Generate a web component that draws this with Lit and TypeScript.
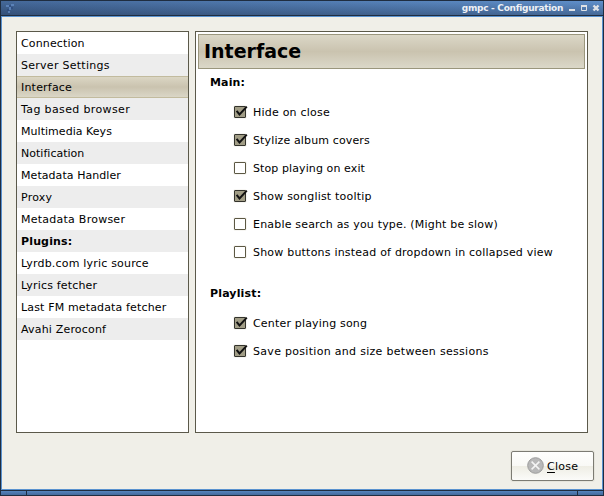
import { LitElement, html, css, svg } from "lit";
import { customElement, property } from "lit/decorators.js";
import { classMap } from "lit/directives/class-map.js";
import { styleMap } from "lit/directives/style-map.js";

interface Page {
  label: string;
  tracking: number;
}

interface Option extends Page {
  on: boolean;
}

const PAGES: Page[] = [
  { label: "Connection", tracking: 0.15 },
  { label: "Server Settings", tracking: 0.27 },
  { label: "Interface", tracking: 0.2 },
  { label: "Tag based browser", tracking: 0.37 },
  { label: "Multimedia Keys", tracking: 0.04 },
  { label: "Notification", tracking: 0.02 },
  { label: "Metadata Handler", tracking: 0.06 },
  { label: "Proxy", tracking: 0.25 },
  { label: "Metadata Browser", tracking: 0.25 },
  { label: "Plugins:", tracking: 0.15 },
  { label: "Lyrdb.com lyric source", tracking: 0.19 },
  { label: "Lyrics fetcher", tracking: 0.18 },
  { label: "Last FM metadata fetcher", tracking: 0.15 },
  { label: "Avahi Zeroconf", tracking: 0.18 },
];

const MAIN: Option[] = [
  { label: "Hide on close", on: true, tracking: 0.22 },
  { label: "Stylize album covers", on: true, tracking: 0.13 },
  { label: "Stop playing on exit", on: false, tracking: 0.1 },
  { label: "Show songlist tooltip", on: true, tracking: 0.2 },
  { label: "Enable search as you type. (Might be slow)", on: false, tracking: 0.19 },
  { label: "Show buttons instead of dropdown in collapsed view", on: false, tracking: 0.21 },
];

const PLAYLIST: Option[] = [
  { label: "Center playing song", on: true, tracking: 0.18 },
  { label: "Save position and size between sessions", on: true, tracking: 0.3 },
];

@customElement("check-option")
export class CheckOption extends LitElement {
  @property() label = "";
  @property({ type: Number }) tracking = 0;
  @property({ type: Boolean }) on = false;

  static styles = css`
    :host { display: flex; align-items: center; height: 28px; gap: 5px; }
    svg { display: block; flex: none; margin-bottom: 2px; }
    .label { white-space: pre; }
  `;

  render() {
    return html`
      <svg width="15" height="14" viewBox="0 0 15 14">
        <rect x="0.5" y="0.5" width="13" height="13" rx="1" fill="#efeee8" />
        <rect x="1.5" y="1.5" width="11" height="11" rx="0.5"
          fill=${this.on ? "#a19d86" : "#ffffff"} stroke=${this.on ? "#33332c" : "#5c5843"} />
        ${this.on
          ? svg`<path d="M3.6 5.8 L6.5 9.4 L13.8 1.6" fill="none" stroke="#111" stroke-width="2" />`
          : null}
      </svg>
      <span class="label" style=${styleMap({ letterSpacing: `${this.tracking}px` })}>${this.label}</span>
    `;
  }
}

@customElement("app-root")
export class AppRoot extends LitElement {
  static styles = css`
    :host {
      display: flex; flex-direction: column; box-sizing: border-box;
      width: 604px; height: 496px; overflow: hidden;
      background: #1f2d40; padding: 1px;
      font: 11px/14px "DejaVu Sans", sans-serif; letter-spacing: 0.25px; color: #000;
    }
    .title {
      flex: none; box-sizing: border-box; height: 14px; display: flex; align-items: center;
      padding: 0 3px 0 4px; color: #eef1f6;
      background: linear-gradient(rgba(25, 40, 65, 0), rgba(25, 40, 65, 0.38)),
        linear-gradient(90deg, #45699a, #6090cb);
    }
    .title svg { display: block; flex: none; }
    .caption {
      margin-left: auto; margin-right: 5px; font-size: 9px; font-weight: bold;
      letter-spacing: -0.3px; white-space: pre;
    }
    .client {
      flex: none; box-sizing: border-box; height: 474px; margin-top: 1px;
      border: 1px solid #5a92cf; background: #f0efe8; padding: 14px 14px 0 14px;
      display: flex; flex-direction: column;
    }
    .panes { display: flex; gap: 6px; height: 402px; }
    .list, .page { box-sizing: border-box; border: 1px solid #5b594a; background: #fff; }
    .list { width: 173px; }
    .row { box-sizing: border-box; height: 22px; line-height: 22px; padding: 1px 0 0 4px; white-space: pre; }
    .row.alt { background: #ededed; }
    .row.sel {
      background: linear-gradient(#dbd6c4, #cac3af 50%, #dad6c6);
      border-top: 1px solid #c2bb9e; border-bottom: 1px solid #c2bb9e; line-height: 20px;
    }
    .row.head { font-weight: bold; }
    .page { width: 393px; padding: 2px; }
    .heading {
      box-sizing: border-box; height: 35px; border: 1px solid #9a967d;
      background: linear-gradient(#dbd7c7, #cac3af 50%, #dbd8c9);
      font-size: 19px; line-height: 33px; font-weight: bold; padding-left: 5px; letter-spacing: 0;
    }
    .section { font-weight: bold; padding-left: 12px; height: 14px; letter-spacing: 0.15px; }
    .main { margin-top: 7px; }
    .playlist { margin-top: 20px; }
    .options { padding: 9px 0 0 35px; }
    .actions { display: flex; justify-content: flex-end; margin: 18px -6px 0 0; }
    .button {
      box-sizing: border-box; width: 83px; height: 30px; border: 1px solid #7c7b73;
      border-radius: 2px; display: flex; align-items: center; padding-left: 15px; gap: 3px;
      background: linear-gradient(#fefefd, #f9f9f6 50%, #eeede4 50%, #fbfbf9);
      box-shadow: 0 0 0 1px #e6e5dc;
    }
    .button svg { margin-bottom: 1px; }
    .text { padding-top: 1px; }
    .key { text-decoration: underline; text-underline-offset: 2px; }
    .bottom { flex: none; display: flex; gap: 1px; height: 4px; margin-top: 1px; }
    .bottom i { display: block; background: linear-gradient(#5584bd, #44699b); }
    .grip { width: 25px; }
    .mid { flex: 1; }
  `;

  private options(list: Option[]) {
    return list.map((o) => html`
      <check-option .label=${o.label} .on=${o.on} .tracking=${o.tracking}></check-option>
    `);
  }

  render() {
    return html`
      <div class="title">
        <svg width="12" height="12" viewBox="0 0 12 12">
          <path d="M1 3h3v2H1zM4 5h2v3H4zM6 2h3v2H6zM3 9h2v2H3z" fill="#6f9bd8" opacity=".55" />
          <path d="M4 3h2v2H4zM6 5h2v2H6zM2 7h2v2H2z" fill="#26457e" opacity=".55" />
        </svg>
        <span class="caption">gmpc - Configuration</span>
        <svg width="32" height="14" viewBox="0 0 32 14" fill="none" stroke="#dfe2e6">
          <path d="M1 9h6" stroke-width="2" />
          <path d="M13.5 5v4.5h5V5" />
          <path d="M13 5h6" stroke-width="2" />
          <path d="M25.5 4.5l5 5M30.5 4.5l-5 5" stroke-width="2.4" />
        </svg>
      </div>
      <div class="client">
        <div class="panes">
          <div class="list">
            ${PAGES.map((p, i) => html`<div
              class=${classMap({ row: true, alt: i % 2 === 1, sel: i === 2, head: p.label === "Plugins:" })}
              style=${styleMap({ letterSpacing: `${p.tracking}px` })}>${p.label}</div>`)}
          </div>
          <div class="page">
            <div class="heading">Interface</div>
            <div class="section main">Main:</div>
            <div class="options">${this.options(MAIN)}</div>
            <div class="section playlist">Playlist:</div>
            <div class="options">${this.options(PLAYLIST)}</div>
          </div>
        </div>
        <div class="actions">
          <div class="button">
            <svg width="17" height="17" viewBox="0 0 17 17">
              <circle cx="8.5" cy="8.5" r="7.8" fill="#b8b8b8" stroke="#9c9c9c" />
              <path d="M4.6 4.6l7.8 7.8M12.4 4.6l-7.8 7.8" stroke="#f4f4f4" stroke-width="1.5" />
            </svg>
            <span class="text"><span class="key">C</span>lose</span>
          </div>
        </div>
      </div>
      <div class="bottom"><i class="grip"></i><i class="mid"></i><i class="grip"></i></div>
    `;
  }
}
